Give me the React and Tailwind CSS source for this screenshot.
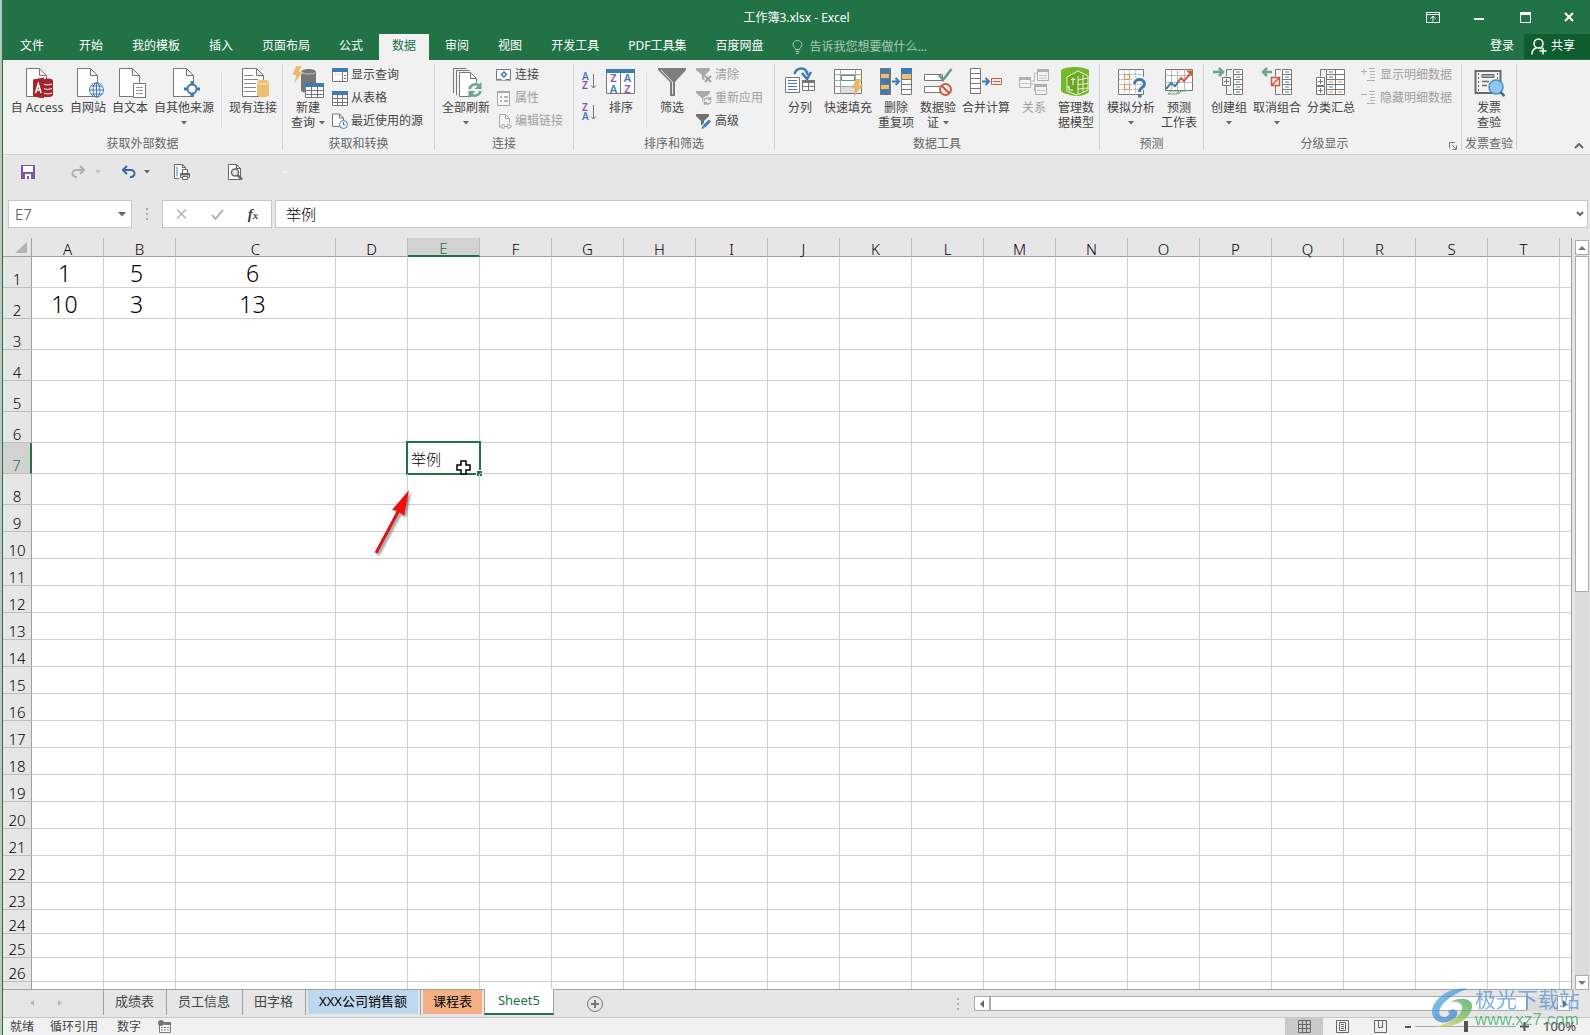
import { useState } from "react";

// ========================== ICON PIECES ============================= //

const GRAY = "#767676";
const BLUE = "#3f7ab8";

function Icon({ children, size = 32 }) {
  return (
    <svg width={size} height={size} viewBox={`0 0 ${size} ${size}`} fill="none" className="shrink-0" aria-hidden="true">
      {children}
    </svg>
  );
}

function Doc({ x = 5, y = 2, w = 20, h = 28, fold = 7 }) {
  return (
    <path
      d={`M${x + 0.5} ${y + 0.5}h${w - fold}l${fold} ${fold}v${h - fold}h-${w}zM${x + 0.5 + w - fold} ${y + 0.5}v${fold}h${fold}`}
      fill="#fff"
      stroke={GRAY}
    />
  );
}

function Bolt({ x, y }) {
  return <path d={`M${x + 4} ${y}h6l-3 6h4l-9 12 2-9h-4z`} fill="#ecb865" />;
}

const icons = {
  access: (
    <Icon>
      <Doc />
      <path d="M22 14v16c3 2 10 1 10-1v-14c0-3-8-3-10-1z" fill="#a4262c" />
      <path d="M22 18q5 2 9 0M22 22.500q5 2 9 0M22 27q5 2 9 0" stroke="#fff" />
      <path d="M12 13.500l11-2v21l-11-2z" fill="#a4262c" />
      <path d="M14.500 27l2.800-9 2.800 9M15.500 24h3.600" stroke="#fff" strokeWidth="1.600" />
    </Icon>
  ),
  web: (
    <Icon>
      <Doc />
      <circle cx="24.500" cy="24" r="7" fill="#fff" stroke={BLUE} />
      <path d="M17.500 24h14M24.500 17v14M19 20h11M19 28h11" stroke={BLUE} />
      <ellipse cx="24.500" cy="24" rx="3.500" ry="7" stroke={BLUE} />
    </Icon>
  ),
  text: (
    <Icon>
      <Doc />
      <path d="M19.500 17.500h12v14h-12z" fill="#fff" stroke={GRAY} />
      <path d="M22 21.500h7M22 24.500h7M22 27.500h7" stroke="#999" />
    </Icon>
  ),
  other: (
    <Icon>
      <Doc />
      <path d="M24 15v16M16 23h16" stroke={BLUE} strokeWidth="3" />
      <circle cx="24" cy="23" r="4.500" fill="#fff" stroke={BLUE} strokeWidth="2" />
    </Icon>
  ),
  existing: (
    <Icon>
      <Doc w={21} />
      <path d="M7 9.500h9M7 13.500h14M7 17.500h12M7 21.500h12M7 25.500h12" stroke="#8a8a8a" />
      <path d="M20 16v13c0 3 12 3 12 0v-13c0-3-12-3-12 0z" fill="#ecc070" />
      <path d="M20.500 16.500c1 2 10 2 11 0" stroke="#fff3d8" />
    </Icon>
  ),
  query: (
    <Icon>
      <path d="M9 6v18c0 4 15 4 15 0v-18c0-4-15-4-15 0z" fill={GRAY} />
      <path d="M10 6.500c2 2 11 2 13 0" stroke="#c8c8c8" />
      <path d="M4 0h6l-3 6h4l-9 12 2-9h-4z" fill="#ecb865" stroke="#f1f1f1" strokeWidth=".5" />
      <path d="M13.500 17.500h18v14h-18z" fill="#fff" stroke={GRAY} />
      <path d="M13 17h19v4h-19z" fill={BLUE} />
      <path d="M13.500 24.500h18M13.500 28.500h18M19.500 21v10M25.500 21v10" stroke={GRAY} />
    </Icon>
  ),
  refresh: (
    <Icon>
      <path d="M3.500 27v-24.500h13M6.500 29v-24.500h13" stroke={GRAY} />
      <Doc x={9} y={6} w={17} h={24} fold={6} />
      <circle cx="25" cy="24" r="7.500" fill="#f1f1f1" />
      <path d="M19.500 23a6 6 0 0 1 10-3M30.500 25a6 6 0 0 1-10 3" stroke="#6aa58c" strokeWidth="2.500" />
      <path d="M31.500 16v7h-7zM18.500 32v-7h7z" fill="#6aa58c" />
    </Icon>
  ),
  sort: (
    <Icon>
      <path d="M1.500 3.500h28v24h-28z" fill="#fff" stroke={GRAY} />
      <path d="M1 3h29v4h-29z" fill={BLUE} />
      <path d="M15.500 7v20" stroke={GRAY} />
      <g fontSize="11" fontWeight="600" textAnchor="middle">
        <text x="8.500" y="16" fill="#8b56a5">Z</text>
        <text x="8.500" y="27" fill={BLUE}>A</text>
        <text x="22.500" y="16" fill={BLUE}>A</text>
        <text x="22.500" y="27" fill="#8b56a5">Z</text>
      </g>
    </Icon>
  ),
  filter: (
    <Icon>
      <path d="M2 2h28v2l-11 12v14h-5v-14l-12-12z" fill="#7d7d7d" />
      <path d="M5 4l11.500 12v12" stroke="#e8e8e8" />
    </Icon>
  ),
  columns: (
    <Icon>
      <path d="M10.500 8c2-7 12-8 13 1" stroke={BLUE} strokeWidth="2.500" />
      <path d="M18 7l5 6 4-7" stroke={BLUE} strokeWidth="2.500" />
      <path d="M1.500 11.500h14v15h-14z" fill="#fff" stroke={GRAY} />
      <path d="M4 14.500h9M4 17.500h9M4 20.500h9M4 23.500h9" stroke={BLUE} />
      <path d="M18.500 14.500h12v10h-12z" fill="#fff" stroke={GRAY} />
      <path d="M18 14h13v3h-13z" fill={GRAY} />
      <path d="M24.500 17v8M18.500 20.500h12" stroke={GRAY} />
    </Icon>
  ),
  flash: (
    <Icon>
      <path d="M2.500 3.500h27v24h-27z" fill="#fff" stroke={GRAY} />
      <path d="M9 21h14v6h-14z" fill="#dcdcdc" />
      <path d="M2.500 8.500h27M2.500 14.500h27M2.500 20.500h27M8.500 3.500v24M23.500 3.500v24" stroke="#a5a5a5" />
      <path d="M9.500 9.500h13v5h-13z" fill="#fff" stroke="#5a9c8a" />
      <Bolt x={20} y={13} />
    </Icon>
  ),
  dedupe: (
    <Icon>
      <path d="M0 2h10v27h-10z" fill={BLUE} />
      <path d="M1 8h8v4h-8zM1 19h8v4h-8z" fill="#ecc070" />
      <path d="M21.500 2.500h10v26h-10z" fill="#fff" stroke={GRAY} />
      <path d="M21 2h11v6h-11z" fill={BLUE} />
      <path d="M22 8h9v5h-9z" fill="#ecc070" />
      <path d="M21.500 13.500h10M21.500 18.500h10M21.500 23.500h10M.5 7.500h10M.5 12.500h10M.5 18.500h10M.5 23.500h10M.5 2.500h10v26h-10z" stroke={GRAY} />
      <path d="M12 15.500h6M15.500 12l3.500 3.500-3.500 3.500" stroke={BLUE} strokeWidth="2" />
    </Icon>
  ),
  validate: (
    <Icon>
      <path d="M2.500 8.500h18v6h-18zM2.500 20.500h18v6h-18z" fill="#fff" stroke={GRAY} />
      <path d="M17 9l4 5 8.500-11" stroke="#5f9c83" strokeWidth="2.500" />
      <circle cx="23.500" cy="23.500" r="5.500" fill="#f1f1f1" stroke="#cf5a42" strokeWidth="2" />
      <path d="M19.500 19.500l8 8" stroke="#cf5a42" strokeWidth="2" />
    </Icon>
  ),
  merge: (
    <Icon>
      <path d="M.5 2.500h10v25h-10zM.5 7.500h10M.5 12.500h10M.5 17.500h10M.5 22.500h10" fill="#fff" stroke={GRAY} />
      <path d="M12 15.500h6M15.500 12l3.500 3.500-3.500 3.500" stroke={BLUE} strokeWidth="2" />
      <path d="M21.500 12.500h10v6h-10zM23 15.500h7" stroke="#cf5a42" />
    </Icon>
  ),
  relation: (
    <Icon>
      <path d="M12.500 15h4v-8h3M12.500 18h4v7h2" stroke="#bcbcbc" />
      <path d="M1.500 11.500h11v10h-11zM19.500 3.500h11v11h-11zM17.500 18.500h11v10h-11z" fill="#f4f4f4" stroke="#b0b0b0" />
      <path d="M1 11h12v3h-12zM19 3h12v3h-12zM17 18h12v3h-12z" fill="#b0b0b0" />
      <path d="M3 17.500h8M21 9.500h8M21 12h8M19 24.500h8" stroke="#c4c4c4" />
    </Icon>
  ),
  model: (
    <Icon>
      <path d="M1 4c5-4 22-4 28 0v22c-2 2-7 4-12 4s-15-3-16-5z" fill="#76b82a" />
      <path d="M7 11l11-6 10 5v14l-11 5-10-4z" fill="#6aa824" stroke="#e9f6d8" />
      <path d="M18 10v18M18 14l10-2M18 18.500l10-1M18 23l10-1M23 9v17" stroke="#e9f6d8" />
      <path d="M9 20v4h4M9 20l-1.500 2M13 12v7M13 12l-2 2M13 12l2 2" stroke="#fff" />
    </Icon>
  ),
  whatif: (
    <Icon>
      <path d="M3.500 3.500h25v25h-25z" fill="#fff" stroke={GRAY} />
      <path d="M9.500 3.500v25M14.500 3.500v25M20.500 3.500v25M3.500 8.500h25M3.500 13.500h25M3.500 18.500h25M3.500 23.500h25" stroke="#b0b0b0" strokeDasharray="2 1" />
      <path d="M9.500 8.500h5v5h-5zM9.500 18.500h5v5h-5z" fill="#fff" stroke="#e08a4a" />
      <path d="M19 17c0-6 11-6 11 0 0 4-5 4-5 9" stroke="#f4f4f4" strokeWidth="5" />
      <path d="M19.500 18c0-6 10-6 10 0 0 4-5 3-5 8" stroke={BLUE} strokeWidth="3" />
      <path d="M23 28h3.500v3.500h-3.500z" fill={BLUE} />
    </Icon>
  ),
  forecast: (
    <Icon>
      <path d="M2.500 3.500h27v21h-27z" fill="#fff" stroke={GRAY} />
      <path d="M8.500 3.500v21M14.500 3.500v21M21.500 3.500v21M2.500 9.500h27M2.500 16.500h27" stroke="#b8b8b8" />
      <path d="M5 28l3-3h8l-2 3zM15 28l3-3h5" stroke="#6f9f6a" />
      <path d="M3 23l5-6 4 3 4-5" stroke={BLUE} strokeWidth="2" />
      <path d="M15 16l3-4 3 3 6-7" stroke="#cf5a42" strokeWidth="2" />
      <path d="M23 4.500h6v6z" fill="#cf5a42" />
    </Icon>
  ),
  group: (
    <Icon>
      <path d="M0 6h9M6 2l4 4-4 4" stroke="#6aa58c" strokeWidth="2.500" />
      <path d="M19 3.500h-5.500v7M13.500 20v8.500h5.500" stroke={GRAY} />
      <path d="M9.500 11.500h8v8h-8zM11 15.500h5M13.500 13v5" stroke={GRAY} />
      <path d="M20.500 3.500h9v25h-9zM20.500 8.500h9M20.500 13.500h9M20.500 18.500h9M20.500 23.500h9" fill="#fff" stroke={GRAY} />
      <path d="M23 6h4M23 11h4M23 16h4M23 21h4M23 26h4" stroke={BLUE} />
    </Icon>
  ),
  ungroup: (
    <Icon>
      <path d="M11 6h-8M6 2l-4 4 4 4" stroke="#6aa58c" strokeWidth="2.500" />
      <path d="M20 3.500h-5.500v7M14.500 20v8.500h5.500" stroke={GRAY} />
      <path d="M10.500 11.500h8v8h-8zM11 19l7-7" stroke="#cf5a42" strokeWidth="1.500" />
      <path d="M21.500 3.500h9v25h-9zM21.500 8.500h9M21.500 13.500h9M21.500 18.500h9M21.500 23.500h9" fill="#fff" stroke={GRAY} />
      <path d="M24 6h4M24 11h4M24 16h4M24 21h4M24 26h4" stroke={BLUE} />
    </Icon>
  ),
  subtotal: (
    <Icon>
      <path d="M11 3.500h-5.500v7" stroke={GRAY} />
      <path d="M11.500 3.500h18v25h-18z" fill="#fff" stroke={GRAY} />
      <path d="M11.500 8.500h18M11.500 13.500h18M11.500 18.500h18M11.500 23.500h18M20.500 3.500v25" stroke={GRAY} />
      <path d="M1.500 11.500h8v8h-8zM1.500 20.500h8v8h-8zM3 15.500h5M5.500 13v5M3 24.500h5M5.500 22v5" fill="#fff" stroke={GRAY} />
      <path d="M14 6h4M14 11h4M14 21h4" stroke={BLUE} />
      <path d="M14 16h4M14 26h4M23 16h4M23 26h4" stroke="#e08a4a" />
    </Icon>
  ),
  invoice: (
    <Icon>
      <path d="M2.500 5h25v22h-25z" stroke="#6a6a6a" strokeWidth="2" />
      <path d="M5.500 7v19M24.500 7v8" stroke="#6a6a6a" strokeDasharray="2 2" />
      <path d="M9 8.500h12v3h-12z" fill="#aaa" stroke="#6a6a6a" />
      <path d="M9 15.500h7M9 19.500h5" stroke="#6a6a6a" strokeWidth="1.500" />
      <circle cx="23" cy="21" r="7" fill="#8fc6f5" stroke="#4b8fc4" strokeWidth="1.500" />
      <path d="M27.500 26l4 4" stroke="#35749f" strokeWidth="2.500" />
    </Icon>
  ),
};

const small = {
  showQuery: (
    <Icon size={16}>
      <path d="M.5 1.500h15v13h-15z" fill="#fff" stroke={GRAY} />
      <path d="M0 1h16v4h-16z" fill={BLUE} />
      <path d="M10.500 5v10M12 8.500h2M12 11.500h2" stroke={GRAY} />
      <path d="M3 7.500h5" stroke="#aaa" strokeDasharray="1 1" />
    </Icon>
  ),
  table: (
    <Icon size={16}>
      <path d="M.5 1.500h15v14h-15z" fill="#fff" stroke={GRAY} />
      <path d="M0 1h16v4h-16z" fill={BLUE} />
      <path d="M.5 8.500h15M.5 12.500h15M5.500 5v10M10.500 5v10" stroke={GRAY} />
    </Icon>
  ),
  recent: (
    <Icon size={16}>
      <path d="M.5 1h7l4 4v8.500h-11zM7.500 1v4h4" fill="#fff" stroke={GRAY} />
      <circle cx="11.500" cy="11.500" r="4" fill="#fff" stroke={BLUE} />
      <path d="M11.500 9v3h2" stroke={BLUE} />
    </Icon>
  ),
  link: (
    <Icon size={16}>
      <path d="M.5 2.500h14v10h-5M.5 2.500v10h5" fill="#fff" stroke={GRAY} />
      <path d="M0 13.500h15" stroke="#aaa" />
      <path d="M8 5l2.500 2.500-2.500 2.500-2.500-2.500z" stroke={BLUE} strokeWidth="1.500" />
    </Icon>
  ),
  props: (
    <Icon size={16}>
      <path d="M1.500 1.500h12v14h-12z" fill="#f7f7f7" stroke="#a8a8a8" />
      <path d="M1 1h13v2h-13z" fill="#a8a8a8" />
      <path d="M4 7h2M8 7h4M4 11h2M8 11h4" stroke="#a0a0a0" strokeWidth="1.500" />
    </Icon>
  ),
  editLink: (
    <Icon size={16}>
      <path d="M4 14.500h-.5v-13h6l4 4v5M9.500 1.500v4h4" stroke="#a8a8a8" />
      <path d="M9 12h-2.500a1.500 1.500 0 0 0 0 3h2.500M11 12h2.500a1.500 1.500 0 0 1 0 3h-2.500M8 13.500h4" stroke="#a0a0a0" />
    </Icon>
  ),
  clear: (
    <Icon size={16}>
      <path d="M0 1h14v2l-5 5v6l-3-2v-4l-6-5z" fill="#a9a9a9" />
      <path d="M9 9l6 6M15 9l-6 6" stroke="#f1f1f1" strokeWidth="4" />
      <path d="M9 9l6 6M15 9l-6 6" stroke="#a0a0a0" strokeWidth="2" />
    </Icon>
  ),
  reapply: (
    <Icon size={16}>
      <path d="M0 1h14v2l-5 5v6l-3-2v-4l-6-5z" fill="#a9a9a9" />
      <circle cx="11.500" cy="11" r="5" fill="#f1f1f1" />
      <path d="M8 11a3.500 3.500 0 0 1 6-2M15 11a3.500 3.500 0 0 1-6 2M14.500 7v2.500h-2.500M8.500 15v-2.500h2.500" stroke="#a9a9a9" strokeWidth="1.500" />
    </Icon>
  ),
  advanced: (
    <Icon size={16}>
      <path d="M0 1h13v2l-5 5v6l-3-2v-4l-5-5z" fill="#6f6f6f" />
      <path d="M7 14.500l7-7" stroke="#f1f1f1" strokeWidth="5" />
      <path d="M8 13.500l6-6" stroke={BLUE} strokeWidth="3" />
      <path d="M5.500 16l1-3.500 2.500 2.500z" fill={BLUE} />
    </Icon>
  ),
  showDetail: (
    <Icon size={16}>
      <path d="M0 4.500h6M3 1.500v6M8 1.500h6M9 4.500h5M9 7.500h5M9 10.500h5M6 13.500h8" stroke="#b0b0b0" />
    </Icon>
  ),
  hideDetail: (
    <Icon size={16}>
      <path d="M0 4.500h6M8 1.500h6M9 4.500h5M9 7.500h5M9 10.500h5M6 13.500h8" stroke="#b0b0b0" />
    </Icon>
  ),
};

function Caret({ className = "text-[#666]" }) {
  return (
    <svg width="6" height="4" viewBox="0 0 6 4" className={`inline-block shrink-0 ${className}`} aria-hidden="true">
      <path d="M0 0h6l-3 3.500z" fill="currentColor" />
    </svg>
  );
}

function SortIcon({ top, bottom, topColor, bottomColor }) {
  return (
    <svg width="16" height="20" viewBox="0 0 16 20" fill="none" fontSize="10" fontWeight="600" aria-hidden="true">
      <text x="1" y="9" fill={topColor}>{top}</text>
      <text x="1" y="18" fill={bottomColor}>{bottom}</text>
      <path d="M12.500 3v14M10 14.500l2.500 2.500 2.500-2.500" stroke={GRAY} />
    </svg>
  );
}

// ========================== RIBBON ============================= //

function Big({ icon, lines, caret, inlineCaret, disabled, width = "min-w-[42px]" }) {
  return (
    <button
      disabled={disabled}
      className={`flex shrink-0 flex-col items-center px-[3px] pt-[3px] leading-[15px] whitespace-nowrap ${width} ${disabled ? "text-[#a0a0a0]" : "text-[#444]"}`}
    >
      {icons[icon]}
      <span className="mt-0.5">{lines[0]}</span>
      {lines[1] && (
        <span className="flex items-center gap-1">
          {lines[1]}
          {inlineCaret && <Caret />}
        </span>
      )}
      {caret && <span className="flex h-[15px] items-center"><Caret /></span>}
    </button>
  );
}

function SmallList({ items }) {
  return (
    <div className="ml-[3px] flex shrink-0 flex-col">
      {items.map((item) => (
        <button
          key={item.label}
          disabled={item.disabled}
          className={`flex h-[23px] items-center gap-[3px] whitespace-nowrap ${item.disabled ? "text-[#a0a0a0]" : "text-[#444]"}`}
        >
          {small[item.icon]}
          <span>{item.label}</span>
        </button>
      ))}
    </div>
  );
}

function Group({ title, width, launcher, children }) {
  return (
    <>
      <div className={`relative flex shrink-0 flex-col pt-[3px] ${width}`}>
        <div className="flex h-[69px] pl-1">{children}</div>
        <div className={`mt-1 text-center leading-[15px] whitespace-nowrap text-[#666] ${launcher ? "pr-4" : ""}`}>{title}</div>
        {launcher && (
          <button className="absolute right-1 bottom-1" aria-label="分级显示设置">
            <svg width="8" height="8" viewBox="0 0 8 8" fill="none">
              <path d="M.5 6v-5.500h5.500M3 3l4 4M7.500 3.500v4h-4" stroke="#777" />
            </svg>
          </button>
        )}
      </div>
      <div className="my-1 w-px shrink-0 bg-[#d2d2d2]" />
    </>
  );
}

function Separator() {
  return <div className="mx-1 mt-2 mb-1 w-px shrink-0 bg-[#dedede]" />;
}

function Ribbon() {
  return (
    <div className="flex h-[95px] shrink-0 border-b border-[#d2d2d2] bg-[#f1f1f1]">
      <Group title="获取外部数据" width="w-[279px]">
        <Big icon="access" lines={["自 Access"]} width="min-w-[60px]" />
        <Big icon="web" lines={["自网站"]} />
        <Big icon="text" lines={["自文本"]} />
        <Big icon="other" lines={["自其他来源"]} caret />
        <Separator />
        <Big icon="existing" lines={["现有连接"]} />
      </Group>
      <Group title="获取和转换" width="w-[151px]">
        <Big icon="query" lines={["新建", "查询"]} inlineCaret />
        <SmallList
          items={[
            { icon: "showQuery", label: "显示查询" },
            { icon: "table", label: "从表格" },
            { icon: "recent", label: "最近使用的源" },
          ]}
        />
      </Group>
      <Group title="连接" width="w-[138px]">
        <Big icon="refresh" lines={["全部刷新"]} caret />
        <SmallList
          items={[
            { icon: "link", label: "连接" },
            { icon: "props", label: "属性", disabled: true },
            { icon: "editLink", label: "编辑链接", disabled: true },
          ]}
        />
      </Group>
      <Group title="排序和筛选" width="w-[200px]">
        <div className="flex flex-col gap-[11px] px-[3px] pt-2">
          <button aria-label="升序"><SortIcon top="A" bottom="Z" topColor={BLUE} bottomColor="#8b56a5" /></button>
          <button aria-label="降序"><SortIcon top="Z" bottom="A" topColor="#8b56a5" bottomColor={BLUE} /></button>
        </div>
        <Big icon="sort" lines={["排序"]} />
        <Separator />
        <Big icon="filter" lines={["筛选"]} />
        <SmallList
          items={[
            { icon: "clear", label: "清除", disabled: true },
            { icon: "reapply", label: "重新应用", disabled: true },
            { icon: "advanced", label: "高级" },
          ]}
        />
      </Group>
      <Group title="数据工具" width="w-[324px]">
        <Big icon="columns" lines={["分列"]} />
        <Big icon="flash" lines={["快速填充"]} />
        <Big icon="dedupe" lines={["删除", "重复项"]} />
        <Big icon="validate" lines={["数据验", "证"]} inlineCaret />
        <Big icon="merge" lines={["合并计算"]} />
        <Big icon="relation" lines={["关系"]} disabled />
        <Big icon="model" lines={["管理数", "据模型"]} />
      </Group>
      <Group title="预测" width="w-[103px]">
        <Big icon="whatif" lines={["模拟分析"]} caret />
        <Big icon="forecast" lines={["预测", "工作表"]} />
      </Group>
      <Group title="分级显示" width="w-[257px]" launcher>
        <Big icon="group" lines={["创建组"]} caret />
        <Big icon="ungroup" lines={["取消组合"]} caret />
        <Big icon="subtotal" lines={["分类汇总"]} />
        <SmallList
          items={[
            { icon: "showDetail", label: "显示明细数据", disabled: true },
            { icon: "hideDetail", label: "隐藏明细数据", disabled: true },
          ]}
        />
      </Group>
      <Group title="发票查验" width="w-[54px]">
        <Big icon="invoice" lines={["发票", "查验"]} width="min-w-[46px]" />
      </Group>
      <button className="mt-auto mr-0.5 mb-px ml-auto p-1" aria-label="折叠功能区">
        <svg width="10" height="6" viewBox="0 0 10 6" fill="none">
          <path d="M1 5l4-4 4 4" stroke="#666" strokeWidth="2" />
        </svg>
      </button>
    </div>
  );
}

// ========================== TITLE + TABS ============================= //

const tabs = ["开始", "我的模板", "插入", "页面布局", "公式", "数据", "审阅", "视图", "开发工具", "PDF工具集", "百度网盘"];

function TitleBar() {
  return (
    <div className="grid h-[34px] shrink-0 grid-cols-3 items-center bg-[#217346] text-white">
      <h1 className="col-start-2 pt-0.5 text-center">工作簿3.xlsx - Excel</h1>
      <div className="flex items-center justify-end">
        <button className="flex w-[46px] justify-center" aria-label="功能区显示选项">
          <svg width="14" height="11" viewBox="0 0 14 11" fill="none" stroke="#fff">
            <path d="M.5 .5h13v10h-13zM.5 2.500h13M7 9.500v-5M4.500 6.500l2.500-2.500 2.500 2.500" />
          </svg>
        </button>
        <button className="flex w-[46px] justify-center" aria-label="最小化">
          <svg width="10" height="10" viewBox="0 0 10 10"><path d="M0 6h10v2h-10z" fill="#fff" /></svg>
        </button>
        <button className="flex w-[46px] justify-center" aria-label="最大化">
          <svg width="11" height="11" viewBox="0 0 11 11"><path d="M.5 .5h10v10h-10z" fill="none" stroke="#fff" /><path d="M0 0h11v3h-11z" fill="#fff" /></svg>
        </button>
        <button className="flex w-[42px] justify-center" aria-label="关闭">
          <svg width="10" height="10" viewBox="0 0 10 10"><path d="M1 1l8 8M9 1l-8 8" stroke="#fff" strokeWidth="2" /></svg>
        </button>
      </div>
    </div>
  );
}

function TabBar({ tab, onTab }) {
  return (
    <div className="flex h-[26px] shrink-0 items-stretch bg-[#217346] text-white">
      <button className="w-[60px] pr-0.5 pb-0.5">文件</button>
      <nav className="ml-[3px] flex gap-[3px]">
        {tabs.map((name) => (
          <button
            key={name}
            onClick={() => onTab(name)}
            className={`px-[13px] pb-0.5 whitespace-nowrap ${name === tab ? "bg-[#f1f1f1] text-[#217346]" : ""}`}
          >
            {name}
          </button>
        ))}
      </nav>
      <label className="ml-4 flex items-center gap-1.5 text-[#a6cbb5]">
        <svg width="11" height="14" viewBox="0 0 11 14" fill="none" stroke="currentColor">
          <path d="M3.500 9.500c0-2-2.500-2.500-2.500-5a4.500 4 0 0 1 9 0c0 2.500-2.500 3-2.500 5zM3.500 11.500h4M4 13.500h3" />
        </svg>
        <input className="w-40 bg-transparent outline-none placeholder:text-[#a6cbb5]" placeholder="告诉我您想要做什么..." aria-label="告诉我您想要做什么" />
      </label>
      <button className="mr-2.5 ml-auto pb-0.5">登录</button>
      <button className="mb-px flex w-[66px] items-center gap-1 bg-[#0f5c2f] pb-px pl-[7px]">
        <svg width="16" height="17" viewBox="0 0 16 17" fill="none" stroke="#fff" strokeWidth="1.500">
          <circle cx="7.500" cy="5.500" r="4.500" />
          <path d="M1 16.500c0-4 2-6 4.500-6.500M9 10l1.500 1M12 9.500v7M8.500 13h7" />
        </svg>
        共享
      </button>
    </div>
  );
}

function QuickAccess() {
  return (
    <div className="flex h-[45px] shrink-0 items-center pb-3 pl-[18px]">
      <button aria-label="保存">
        <svg width="14" height="14" viewBox="0 0 14 14">
          <path d="M0 0h14v14h-14z" fill="#8055a5" />
          <path d="M2 1h10v6h-10zM4 9h6v5h-2v-3h-2v3h-2z" fill="#fff" />
        </svg>
      </button>
      <button className="ml-9 flex items-center gap-2.5 text-[#b0b0b0]" aria-label="恢复">
        <svg width="14" height="13" viewBox="0 0 14 13" fill="none" stroke="currentColor" strokeWidth="2">
          <path d="M13 5h-8a3.500 3.500 0 0 0 0 7h1M9 1l4 4-4 4" />
        </svg>
        <Caret className="text-[#c4c4c4]" />
      </button>
      <button className="ml-[21px] flex items-center gap-2 text-[#3568a8]" aria-label="撤消">
        <svg width="14" height="13" viewBox="0 0 14 13" fill="none" stroke="currentColor" strokeWidth="2">
          <path d="M1 5h8a3.500 3.500 0 0 1 0 7h-1M5 1l-4 4 4 4" />
        </svg>
        <Caret />
      </button>
      <button className="ml-6" aria-label="快速打印">
        <svg width="17" height="16" viewBox="0 0 17 16" fill="none" stroke="#666">
          <path d="M5 14.500h-4.500v-14h8l3 3v2M8.500 .5v3h3" fill="#fff" />
          <path d="M3 2.500v10" stroke={BLUE} />
          <path d="M8.500 9v-3.500h5v3.500M6.500 9.500h9v4h-9z" fill="#fff" />
          <path d="M6.500 10.500h9" strokeWidth="2" />
          <path d="M8.500 12.500h5v3h-5z" fill="#fff" />
        </svg>
      </button>
      <button className="ml-[37px]" aria-label="打印预览">
        <svg width="15" height="16" viewBox="0 0 15 16" fill="none" stroke="#666">
          <path d="M.5 .5h8l4 4v11h-12zM8.500 .5v4h4" fill="#fff" />
          <circle cx="7" cy="8.500" r="3.500" fill="#e6e6e6" strokeWidth="1.500" />
          <path d="M9.500 11l4.500 4.500" strokeWidth="2.500" />
        </svg>
      </button>
      <span className="ml-10 h-0.5 w-1 bg-[#f4f4f4]" />
    </div>
  );
}

function FormulaBar() {
  return (
    <div className="flex h-7 shrink-0 pr-0.5 pl-[5px] text-[15px] text-[#444]">
      <div className="flex w-[124px] items-center border border-[#c6c6c6] bg-white pr-[5px]">
        <input className="w-full min-w-0 pl-1.5 font-light outline-none" defaultValue="E7" aria-label="名称框" />
        <button aria-label="名称框列表">
          <svg width="8" height="5" viewBox="0 0 8 5"><path d="M0 0h8l-4 4.500z" fill="#666" /></svg>
        </button>
      </div>
      <div className="flex w-[30px] flex-col items-center justify-center gap-[3px]">
        <span className="size-0.5 bg-[#a8a8a8]" />
        <span className="size-0.5 bg-[#a8a8a8]" />
        <span className="size-0.5 bg-[#a8a8a8]" />
      </div>
      <div className="flex w-[110px] items-center border border-[#c6c6c6] bg-white">
        <button className="flex w-9 justify-center" aria-label="取消">
          <svg width="11" height="10" viewBox="0 0 11 10"><path d="M1 .5l9 9M10 .5l-9 9" stroke="#b4b4b4" strokeWidth="1.500" /></svg>
        </button>
        <button className="flex w-9 justify-center" aria-label="输入">
          <svg width="13" height="11" viewBox="0 0 13 11" fill="none"><path d="M1 6l3.500 4 7.500-9" stroke="#b4b4b4" strokeWidth="2" /></svg>
        </button>
        <button className="flex-1 font-['Liberation_Serif',serif] text-[15px] leading-5 font-semibold italic" aria-label="插入函数">
          f<span className="text-[11px]">x</span>
        </button>
      </div>
      <div className="ml-[3px] flex flex-1 items-center border border-[#c6c6c6] bg-white pr-[3px]">
        <input className="min-w-0 flex-1 pl-2.5 font-light text-black outline-none" defaultValue="举例" aria-label="编辑栏" />
        <button aria-label="展开编辑栏">
          <svg width="8" height="6" viewBox="0 0 8 6" fill="none"><path d="M1 1l3 3 3-3" stroke="#666" strokeWidth="2" /></svg>
        </button>
      </div>
    </div>
  );
}

// ========================== SHEET ============================= //

const columns = "ABCDEFGHIJKLMNOPQRST".split("");
const rows = Array.from({ length: 26 }, (_, i) => i + 1);

const cells = {
  A1: "1",
  B1: "5",
  C1: "6",
  A2: "10",
  B2: "3",
  C2: "13",
};

function rowHeight(row) {
  if (row <= 8) return "h-[31px]";
  if (row <= 23) return "h-[27px]";
  return "h-6";
}

function ActiveCell() {
  return (
    <>
      <div className="pt-0.5 pl-[3px] text-[15px] font-light">举例</div>
      <span className="pointer-events-none absolute -inset-y-[2px] -right-[2px] -left-[2px] border-2 border-[#217346]" />
      <span className="absolute -right-[4px] -bottom-[4px] size-[7px] border border-white bg-[#217346]" />
      {/* mouse cursor */}
      <svg width="15" height="15" viewBox="0 0 15 15" className="absolute top-[17px] left-[48px] z-10">
        <path d="M5 1h5v4h4v5h-4v4h-5v-4h-4v-5h4z" fill="#fff" stroke="#000" strokeWidth="1.500" />
      </svg>
      {/* red pointer */}
      <svg width="46" height="72" viewBox="0 0 46 72" className="absolute top-[45px] -left-[36px] z-10 drop-shadow-[2px_2px_1px_rgba(0,0,0,0.4)]">
        <path d="M4 65L27 22" stroke="#d9141a" strokeWidth="3" />
        <path d="M37 2L20 22l6 1 6 5z" fill="#f20d0d" />
      </svg>
    </>
  );
}

function Sheet() {
  return (
    <div className="mt-[10px] flex min-h-0 flex-1">
      <div className="min-w-0 flex-1 overflow-hidden border-r border-b border-[#a0a0a0] bg-white">
        <table className="w-full table-fixed border-separate border-spacing-0 leading-[18px]">
          <colgroup>
            <col className="w-[29px]" />
            {columns.map((c) => (
              <col key={c} className={c === "C" ? "w-[160px]" : "w-[72px]"} />
            ))}
            <col />
          </colgroup>
          <thead>
            <tr className="h-[19px] bg-[#e6e6e6] text-[15px]">
              <th className="h-[19px] border-r border-b border-[#a0a0a0] p-0">
                <svg width="12" height="11" viewBox="0 0 12 11" className="mr-1 ml-auto"><path d="M12 0v11h-12z" fill="#b4b4b4" /></svg>
              </th>
              {columns.map((c) => (
                <th
                  key={c}
                  scope="col"
                  className={`h-[19px] border-r p-0 font-light ${c === "E" ? "border-b-2 border-r-[#bdbdbd] border-b-[#217346] bg-[#d2d2d2] text-[#217346]" : "border-b border-r-[#bdbdbd] border-b-[#a0a0a0] text-black"}`}
                >
                  <div className="h-[17px] leading-5">{c}</div>
                </th>
              ))}
              <th className="border-b border-[#a0a0a0] p-0" />
            </tr>
          </thead>
          <tbody>
            {rows.map((row) => (
              <tr key={row} className={rowHeight(row)}>
                <th
                  scope="row"
                  className={`p-0 align-bottom text-[15px] leading-[15px] font-light ${row === 7 ? "border-r-2 border-b border-r-[#217346] border-b-[#bdbdbd] bg-[#d2d2d2] text-[#217346]" : "border-r border-b border-r-[#a0a0a0] border-b-[#bdbdbd] bg-[#e6e6e6] text-black"}`}
                >
                  {row}
                </th>
                {columns.map((c) => (
                  <td key={c} className="relative border-r border-b border-[#d0d0d0] p-0 text-black">
                    {c + row === "E7" ? (
                      <ActiveCell />
                    ) : (
                      cells[c + row] && <div className="pt-0.5 pr-1.5 text-center text-[23px] leading-[26px] font-light">{cells[c + row]}</div>
                    )}
                  </td>
                ))}
                <td className="border-b border-[#d0d0d0] p-0" />
              </tr>
            ))}
            <tr className="h-6">
              <td className="border-r border-[#a0a0a0] bg-[#e6e6e6] p-0" />
              {columns.map((c) => (
                <td key={c} className="border-r border-[#d0d0d0] p-0" />
              ))}
              <td className="p-0" />
            </tr>
          </tbody>
        </table>
      </div>

      {/* vertical scroll bar */}
      <div className="mt-0.5 mr-px ml-[3px] flex w-[14px] shrink-0 flex-col bg-[#dcdcdc]">
        <button className="flex h-[15px] shrink-0 items-center justify-center border border-[#ababab] bg-white" aria-label="向上滚动">
          <svg width="8" height="4" viewBox="0 0 8 4"><path d="M0 4l4-4 4 4z" fill="#777" /></svg>
        </button>
        <div className="mt-px h-[336px] shrink-0 border border-[#ababab] bg-white" />
        <button className="mt-auto flex h-[15px] shrink-0 items-center justify-center border border-[#ababab] bg-white" aria-label="向下滚动">
          <svg width="8" height="4" viewBox="0 0 8 4"><path d="M0 0l4 4 4-4z" fill="#777" /></svg>
        </button>
      </div>
    </div>
  );
}

function SheetTabs() {
  return (
    <div className="flex h-7 shrink-0 items-start border-b border-[#c6c6c6] text-[13px] text-[#444]">
      <div className="flex h-[25px] w-[101px] shrink-0 items-center gap-6 border-r border-[#a0a0a0] pl-[27px]">
        <button aria-label="上一个工作表"><svg width="4" height="6" viewBox="0 0 4 6"><path d="M4 0v6l-4-3z" fill="#b8b8b8" /></svg></button>
        <button aria-label="下一个工作表"><svg width="4" height="6" viewBox="0 0 4 6"><path d="M0 0v6l4-3z" fill="#b8b8b8" /></svg></button>
      </div>
      <button className="h-[25px] border-r border-[#a0a0a0] pr-3 pb-0.5 pl-[11px]">成绩表</button>
      <button className="h-[25px] border-r border-[#a0a0a0] pr-3 pb-0.5 pl-[11px]">员工信息</button>
      <button className="h-[25px] border-r border-[#a0a0a0] pr-3 pb-0.5 pl-[11px]">田字格</button>
      <div className="h-[25px] border-r border-[#a0a0a0] px-0.5">
        <button className="h-6 bg-[#bdd7ee] px-[11px] pb-px text-black">XXX公司销售额</button>
      </div>
      <div className="h-[25px] px-0.5">
        <button className="h-6 bg-[#f4b084] px-2.5 pb-px text-black">课程表</button>
      </div>
      <button className="-mt-px h-[26px] border-x border-b-2 border-x-[#a0a0a0] border-b-[#217346] bg-white px-[13px] text-[#217346]">Sheet5</button>
      <button className="ml-[33px] flex h-[28px] items-center" aria-label="新工作表">
        <svg width="16" height="16" viewBox="0 0 16 16" fill="none" stroke="#777">
          <circle cx="8" cy="8" r="7.500" />
          <path d="M8 4v8M4 8h8" strokeWidth="2" />
        </svg>
      </button>
      <div className="ml-auto flex h-[27px] w-[633px] items-center pr-[18px]">
        <div className="mr-[15px] flex flex-col gap-[3px]">
          <span className="size-0.5 bg-[#b0b0b0]" />
          <span className="size-0.5 bg-[#b0b0b0]" />
          <span className="size-0.5 bg-[#b0b0b0]" />
        </div>
        <div className="flex h-[15px] flex-1 bg-[#dcdcdc]">
          <button className="flex w-4 items-center justify-center border border-[#ababab] bg-white" aria-label="向左滚动">
            <svg width="4" height="8" viewBox="0 0 4 8"><path d="M4 0v8l-4-4z" fill="#666" /></svg>
          </button>
          <div className="mr-[30px] flex-1 border border-[#ababab] bg-white" />
          <button className="flex w-[15px] items-center justify-center border border-[#ababab] bg-white" aria-label="向右滚动">
            <svg width="4" height="8" viewBox="0 0 4 8"><path d="M0 0v8l4-4z" fill="#666" /></svg>
          </button>
        </div>
      </div>
    </div>
  );
}

function StatusBar() {
  const [zoom, setZoom] = useState(100);

  return (
    <div className="flex h-[17px] shrink-0 items-center bg-[#f1f1f1] pl-[7px] text-[#444]">
      <span>就绪</span>
      <span className="ml-4">循环引用</span>
      <span className="ml-[19px]">数字</span>
      <svg width="13" height="13" viewBox="0 0 13 13" fill="none" className="ml-[17px]" aria-hidden="true">
        <path d="M1.500 3.500h11v9h-11z" fill="#fff" stroke="#777" />
        <path d="M6 2h7v3h-7z" fill="#777" />
        <circle cx="3" cy="3" r="3" fill="#777" />
        <path d="M3 7.500h8M3 10h8" stroke="#777" strokeDasharray="2 1" />
      </svg>
      <div className="ml-auto flex h-full items-center">
        <button className="flex h-full w-[38px] items-center justify-center bg-[#c9c9c9]" aria-label="普通">
          <svg width="13" height="13" viewBox="0 0 13 13" fill="none" stroke="#666"><path d="M.5 .5h12v12h-12zM4.500 .5v12M8.500 .5v12M.5 4.500h12M.5 8.500h12" /></svg>
        </button>
        <button className="flex h-full w-[38px] items-center justify-center" aria-label="页面布局">
          <svg width="13" height="13" viewBox="0 0 13 13" fill="none" stroke="#666"><path d="M.5 .5h12v12h-12zM3.500 2.500h6v8h-6zM5 4.500h3M5 6.500h3M5 8.500h3" /></svg>
        </button>
        <button className="flex h-full w-[38px] items-center justify-center" aria-label="分页预览">
          <svg width="13" height="13" viewBox="0 0 13 13" fill="none" stroke="#666"><path d="M.5 .5h12v12h-12zM4.500 .5v7h4M8.500 .5v7" /></svg>
        </button>
        <button className="ml-1.5 h-0.5 w-1.5 bg-[#555]" aria-label="缩小" />
        <input
          type="range"
          min="0"
          max="200"
          value={zoom}
          onChange={(e) => setZoom(Number(e.target.value))}
          aria-label="缩放比例"
          className="mx-1 h-3 w-[101px] appearance-none bg-transparent bg-[linear-gradient(#a8a8a8,#a8a8a8)] bg-[length:100%_1px] bg-center bg-no-repeat [&::-webkit-slider-thumb]:h-[11px] [&::-webkit-slider-thumb]:w-1 [&::-webkit-slider-thumb]:appearance-none [&::-webkit-slider-thumb]:bg-[#555]"
        />
        <button aria-label="放大">
          <svg width="9" height="9" viewBox="0 0 9 9"><path d="M4.500 0v9M0 4.500h9" stroke="#555" strokeWidth="2" /></svg>
        </button>
        <span className="w-[61px] pl-[14px] text-[13px]">{zoom}%</span>
      </div>
    </div>
  );
}

function SiteBadge() {
  return (
    <div className="pointer-events-none absolute right-2.5 bottom-1.5 z-20 flex items-center whitespace-nowrap opacity-70">
      <svg width="44" height="42" viewBox="0 0 44 42" fill="none" aria-hidden="true">
        <defs>
          <linearGradient id="swirl" x1="0" y1="0" x2="1" y2="1">
            <stop offset="0" stopColor="#49b0e6" />
            <stop offset="1" stopColor="#2f6fbf" />
          </linearGradient>
          <linearGradient id="leaf" x1="1" y1="0" x2="0" y2="1">
            <stop offset="0" stopColor="#2f9e5b" />
            <stop offset="1" stopColor="#d9dc4a" />
          </linearGradient>
        </defs>
        {/* blue swirl */}
        <path d="M37 2C17-1 2 13 1 24c0 10 9 14 18 10 7-3 10-9 5-11-3-1-6 0-7 2 3 1 0 5-4 5-11-1-3-20 24-28z" fill="url(#swirl)" />
        {/* green leaf */}
        <path d="M19 15c10-6 24-4 22 6C38 34 22 41 4 40c12-3 25-9 27-18 1-6-5-8-12-7z" fill="url(#leaf)" />
      </svg>
      <div className="flex flex-col items-start">
        <span className="text-[21px] leading-6 text-[#4a8fd6]">极光下载站</span>
        <span className="font-['Liberation_Sans',sans-serif] text-[17px] leading-[18px] text-[#2fa95c]">www.xz7.com</span>
      </div>
    </div>
  );
}

export default function App() {
  const [tab, setTab] = useState("数据");

  return (
    <div className="relative flex h-screen overflow-hidden border-l-2 border-[#b9c9c0] font-['Noto_Sans','Noto_Sans_CJK_SC',sans-serif] text-xs">
      <div className="flex min-w-0 flex-1 flex-col border-l border-[#217346] bg-[#e6e6e6]">
        <TitleBar />
        <TabBar tab={tab} onTab={setTab} />
        <Ribbon />
        <QuickAccess />
        <FormulaBar />
        <Sheet />
        <SheetTabs />
        <StatusBar />
      </div>
      <SiteBadge />
    </div>
  );
}
